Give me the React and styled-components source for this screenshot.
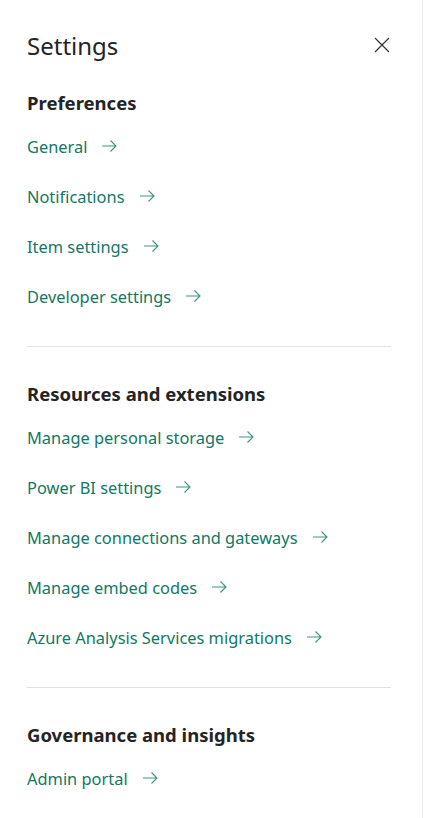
import styled, { createGlobalStyle } from "styled-components";

const GlobalStyle = createGlobalStyle`
  html, body {
    margin: 0;
    padding: 0;
    background: #ffffff;
  }
  body {
    font-family: "Noto Sans", "Open Sans", sans-serif;
  }
`;

const sections = [
  {
    title: "Preferences",
    links: ["General", "Notifications", "Item settings", "Developer settings"],
  },
  {
    title: "Resources and extensions",
    links: [
      "Manage personal storage",
      "Power BI settings",
      "Manage connections and gateways",
      "Manage embed codes",
      "Azure Analysis Services migrations",
    ],
  },
  {
    title: "Governance and insights",
    links: ["Admin portal"],
  },
];

function ArrowIcon() {
  return (
    <svg width="17" height="16" viewBox="0 0 17 16" fill="none">
      <path d="M1 8h14.5M9.5 2.5L15 8l-5.5 5.5" stroke="#3f9482" strokeWidth="1.1" />
    </svg>
  );
}

function CloseIcon() {
  return (
    <svg width="16" height="16" viewBox="0 0 16 16" fill="none">
      <path d="M1 1l14 14M15 1L1 15" stroke="#333" strokeWidth="1.2" />
    </svg>
  );
}

export default function App() {
  return (
    <>
      <GlobalStyle />
      <Panel>
        <Header>
          <Title>Settings</Title>
          <CloseButton aria-label="Close"><CloseIcon /></CloseButton>
        </Header>
        {sections.map((section, i) => (
          <Section key={section.title} first={i === 0}>
            <SectionTitle>{section.title}</SectionTitle>
            <LinkList>
              {section.links.map((link) => (
                <LinkItem key={link}>
                  <span>{link}</span>
                  <ArrowIcon />
                </LinkItem>
              ))}
            </LinkList>
          </Section>
        ))}
      </Panel>
    </>
  );
}

const Panel = styled.div`
  box-sizing: border-box;
  width: 423px;
  height: 818px;
  overflow: hidden;
  padding: 0 31px 0 27px;
  border-right: 1px solid #ececec;
`;

const Header = styled.div`
  display: flex;
  align-items: center;
  justify-content: space-between;
  height: 90px;
`;

const Title = styled.h1`
  margin: 0;
  font-size: 24px;
  font-weight: 400;
  color: #242424;
`;

const CloseButton = styled.button`
  display: flex;
  border: none;
  background: none;
  padding: 0;
  margin-right: 1px;
  cursor: pointer;
`;

const Section = styled.section`
  border-top: ${(p) => (p.first ? "none" : "1px solid #e0e0e0")};
  padding-top: ${(p) => (p.first ? "0" : "34px")};
  padding-bottom: 25px;
`;

const SectionTitle = styled.h2`
  margin: 0 0 5px;
  font-size: 18.5px;
  font-weight: 700;
  color: #242424;
  line-height: 26px;
`;

const LinkList = styled.div`
  display: flex;
  flex-direction: column;
`;

const LinkItem = styled.a`
  display: flex;
  align-items: center;
  gap: 14px;
  height: 50px;
  font-size: 16.4px;
  color: #117865;
  cursor: pointer;
`;
